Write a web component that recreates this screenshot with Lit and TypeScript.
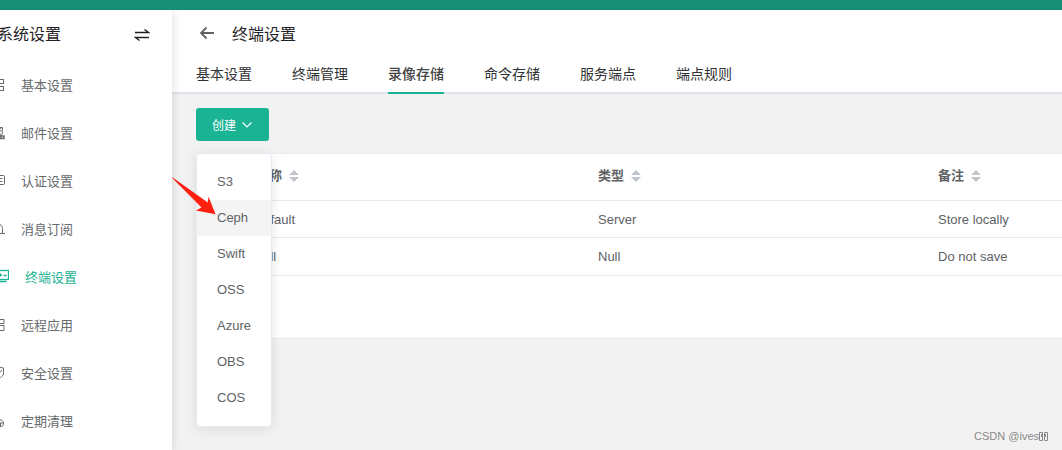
import { LitElement, html, css, svg } from "lit";
import { customElement, state } from "lit/decorators.js";

const glyphs = {
  grid: svg`<rect x="1.500" y="3.500" width="5" height="4"/><rect x="9.500" y="3.500" width="5" height="4"/><rect x="1.500" y="10.500" width="5" height="4"/><rect x="9.500" y="10.500" width="5" height="4"/>`,
  mail: svg`<path d="M1.500 3.500h12v3M1.500 3.500v9h6M1.500 4l5.500 4 5.500-4"/><circle cx="12" cy="8.500" r="1.800"/><path stroke-width="1.500" d="M9.500 12h5.500v2.500H9.500zM12 11v3"/>`,
  list: svg`<rect x="1.500" y="3.500" width="14" height="9" rx="1"/><path d="M9.500 6.500h4M9.500 9.500h4M4 8h2"/>`,
  bell: svg`<path d="M4.500 13V8.500a4.500 4.500 0 0 1 9 0V13M1 13.500h15M6.500 15.500h3"/>`,
  terminal: svg`<rect stroke-width="1.300" x="0.500" y="2.500" width="15" height="9"/><path stroke-width="1.300" d="M3 13.500h10.500M7.500 5.500v3M6 7h3M10.500 7.500h3"/>`,
  apps: svg`<rect x="2.500" y="3.500" width="5" height="4"/><path d="M9.500 3.500h5.500v4H9.500z"/><path d="M9.500 9.500h5.500v5H9.500z"/><rect x="2.500" y="9.500" width="5" height="4"/>`,
  shield: svg`<path d="M8 2.500l6.500 1.500v5c0 3-3 5-6.500 6-3.500-1-5.500-3-5.500-6V4zM6.500 8.500l2.200 2 4.300-4.500"/>`,
  broom: svg`<path d="M10.500 4v4M4 14.500c1-3 2-5 6-6.500h2.500c1.500 1 2 2 2 3s-.5 3.500-2 3.500zM10.500 11h4M11.500 11v3"/>`,
};

type Glyph = keyof typeof glyphs;

const sections: { label: string; icon: Glyph }[] = [
  { label: "基本设置", icon: "grid" },
  { label: "邮件设置", icon: "mail" },
  { label: "认证设置", icon: "list" },
  { label: "消息订阅", icon: "bell" },
  { label: "终端设置", icon: "terminal" },
  { label: "远程应用", icon: "apps" },
  { label: "安全设置", icon: "shield" },
  { label: "定期清理", icon: "broom" },
];

const tabs = ["基本设置", "终端管理", "录像存储", "命令存储", "服务端点", "端点规则"];
const providers = ["S3", "Ceph", "Swift", "OSS", "Azure", "OBS", "COS"];
const columns = ["名称", "类型", "备注"];
const storages = [
  ["default", "Server", "Store locally"],
  ["null", "Null", "Do not save"],
];

@customElement("side-nav")
class SideNav extends LitElement {
  static styles = css`
    :host {
      display: block;
      width: 172px;
      flex: none;
      overflow-x: clip;
      background: #fff;
    }
    .inner {
      margin-left: -12px;
    }
    .head {
      display: flex;
      align-items: center;
      justify-content: space-between;
      height: 50px;
      padding: 0 22px 0 9px;
    }
    h2 {
      margin: 0;
      font-size: 16px;
      font-weight: 400;
      line-height: 24px;
      color: #1f2225;
    }
    .swap {
      padding: 0;
      border: 0;
      background: none;
      color: #1f2225;
      display: flex;
    }
    ul {
      margin: 0;
      padding: 0;
      list-style: none;
    }
    a {
      display: flex;
      align-items: center;
      gap: 16px;
      height: 48px;
      font-size: 13px;
      color: #676a6c;
      text-decoration: none;
    }
    .active {
      padding-left: 4px;
      color: #1ab394;
    }
    .icon {
      display: block;
      margin-left: 1px;
      fill: none;
      stroke: currentColor;
    }
  `;

  render() {
    return html`
      <nav class="inner" aria-label="系统设置">
        <div class="head">
          <h2>系统设置</h2>
          <button class="swap" aria-label="切换">
            <svg width="16" height="14" viewBox="0 0 16 14" fill="none" stroke="currentColor" stroke-width="1.400">
              <path d="M1 4.500h13.500l-4-3M15 9.500H1.500l4 3" />
            </svg>
          </button>
        </div>
        <ul>
          ${sections.map(
            (s) => html`<li>
              <a href="#" class=${s.label === "终端设置" ? "active" : ""}>
                <svg class="icon" width="16" height="16" viewBox="0 0 16 16">${glyphs[s.icon]}</svg>
                <span>${s.label}</span>
              </a>
            </li>`
          )}
        </ul>
      </nav>
    `;
  }
}

@customElement("create-menu")
class CreateMenu extends LitElement {
  static styles = css`
    :host {
      display: block;
      position: relative;
      width: max-content;
    }
    button {
      font: inherit;
      border: 0;
    }
    .trigger {
      display: flex;
      align-items: center;
      gap: 5px;
      height: 33px;
      padding: 0 16px;
      border-radius: 3px;
      background: #1ab394;
      color: #fff;
      font-size: 12px;
    }
    .menu {
      position: absolute;
      z-index: 3;
      top: 45px;
      left: 0;
      margin: 0;
      padding: 10px 0;
      list-style: none;
      background: #fff;
      border: 1px solid #e6ebf5;
      border-radius: 4px;
      box-shadow: 0 2px 12px rgba(0, 0, 0, 0.1);
    }
    .item {
      display: block;
      width: 100%;
      height: 36px;
      padding: 0 20px 2px;
      background: none;
      color: #606266;
      font-size: 13px;
      text-align: left;
    }
    .hover {
      background: #f4f4f4;
    }
  `;

  @state() open = true;

  render() {
    return html`
      <button class="trigger" aria-haspopup="true" aria-expanded=${this.open} @click=${() => (this.open = !this.open)}>
        创建
        <svg width="12" height="12" viewBox="0 0 12 12" fill="none" stroke="currentColor" stroke-width="1.200">
          <path d="M1.500 3.500L6 8l4.500-4.500" />
        </svg>
      </button>
      ${this.open
        ? html`<ul class="menu">
            ${providers.map((p) => html`<li><button class="item ${p === "Ceph" ? "hover" : ""}">${p}</button></li>`)}
          </ul>`
        : ""}
    `;
  }
}

@customElement("storage-table")
class StorageTable extends LitElement {
  static styles = css`
    :host {
      display: block;
      background: #fff;
      border-top: 1px solid #e6ebf5;
      border-bottom: 1px solid #e8e9eb;
      padding-bottom: 62px;
    }
    table {
      width: 100%;
      table-layout: fixed;
      border-collapse: separate;
      border-spacing: 0;
      font-size: 13px;
      color: #606266;
    }
    .check {
      width: 50px;
    }
    .name {
      width: 342px;
    }
    .type {
      width: 340px;
    }
    th,
    td {
      box-sizing: border-box;
      padding: 0 10px;
      text-align: left;
      border-bottom: 1px solid #e7eaec;
    }
    th {
      height: 47px;
      padding-bottom: 6px;
      font-weight: 700;
    }
    td {
      height: 37px;
    }
    tr:last-child td {
      height: 38px;
    }
    .label {
      display: flex;
      align-items: center;
      gap: 7px;
    }
    .sort {
      display: flex;
      padding: 3px 0 0;
      border: 0;
      background: none;
      color: #c0c4cc;
    }
  `;

  render() {
    return html`
      <table>
        <colgroup>
          <col class="check" /><col class="name" /><col class="type" /><col />
        </colgroup>
        <thead>
          <tr>
            <th></th>
            ${columns.map(
              (c) => html`<th>
                <div class="label">
                  ${c}
                  <button class="sort" aria-label="排序">
                    <svg width="10" height="12" viewBox="0 0 10 12" fill="currentColor">
                      <path d="M0 5l5-5 5 5zM0 7h10l-5 5z" />
                    </svg>
                  </button>
                </div>
              </th>`
            )}
          </tr>
        </thead>
        <tbody>
          ${storages.map((row) => html`<tr><td></td>${row.map((v) => html`<td>${v}</td>`)}</tr>`)}
        </tbody>
      </table>
    `;
  }
}

@customElement("app-root")
class AppRoot extends LitElement {
  static styles = css`
    :host {
      display: flex;
      flex-direction: column;
      position: relative;
      height: 100vh;
      overflow: hidden;
      font-family: "Liberation Sans", "Noto Sans CJK SC", sans-serif;
      background: #f2f2f2;
    }
    .topbar {
      flex: none;
      height: 10px;
      background: #178d75;
      position: relative;
      z-index: 2;
    }
    .body {
      display: flex;
      flex: 1;
      min-height: 0;
    }
    side-nav {
      position: relative;
      z-index: 1;
      box-shadow: 0 0 10px rgba(0, 0, 0, 0.14);
    }
    main {
      flex: 1;
      min-width: 0;
    }
    header {
      background: #fff;
      border-bottom: 2px solid #dfe4ed;
    }
    .title {
      display: flex;
      align-items: center;
      gap: 17px;
      height: 48px;
      padding: 0 27px;
    }
    .back {
      display: flex;
      padding: 0 0 2px;
      border: 0;
      background: none;
      color: #606266;
    }
    h1 {
      margin: 0;
      padding-top: 2px;
      font-size: 16px;
      line-height: 24px;
      font-weight: 400;
      color: #1f2225;
    }
    .tabs {
      display: flex;
      gap: 40px;
      padding: 0 24px;
      margin-bottom: -2px;
    }
    .tab {
      font-size: 14px;
      line-height: 32px;
      height: 34px;
      color: #303133;
      text-decoration: none;
      border-bottom: 2px solid transparent;
    }
    .current {
      color: #444;
      font-weight: 500;
      border-color: #1ab394;
    }
    .content {
      display: flex;
      flex-direction: column;
      gap: 12px;
      padding: 14px 0 0 24px;
    }
    .arrow {
      position: absolute;
      z-index: 4;
      left: 171px;
      top: 176px;
      pointer-events: none;
    }
    .credit {
      position: absolute;
      right: 14px;
      bottom: 7px;
      display: flex;
      align-items: center;
      font-size: 11px;
      line-height: 14px;
      color: #8a8a8a;
    }
  `;

  render() {
    return html`
      <div class="topbar"></div>
      <div class="body">
        <side-nav></side-nav>
        <main>
          <header>
            <div class="title">
              <button class="back" aria-label="返回">
                <svg width="16" height="14" viewBox="0 0 16 14" fill="none" stroke="currentColor" stroke-width="1.800">
                  <path d="M15 7H2M7.500 1.500L2 7l5.500 5.500" />
                </svg>
              </button>
              <h1>终端设置</h1>
            </div>
            <nav class="tabs">
              ${tabs.map((t) => html`<a href="#" class="tab ${t === "录像存储" ? "current" : ""}">${t}</a>`)}
            </nav>
          </header>
          <section class="content">
            <create-menu></create-menu>
            <storage-table></storage-table>
          </section>
        </main>
      </div>
      <svg class="arrow" width="46" height="40" viewBox="0 0 46 40" fill="#ff2010">
        <path d="M.700 1.500L2 1.800 36.800 26.500 37.500 20.500 44.500 38.300 25 34.500 30.500 31.500z" />
      </svg>
      <div class="credit">
        CSDN @ives
        <svg width="9" height="9" viewBox="0 0 9 9" fill="none" stroke="currentColor">
          <path d="M.5.500h3v8h-3zM5.500.500h3v8h-3zM2.500 2v3M6.500 2v3" />
        </svg>
      </div>
    `;
  }
}
